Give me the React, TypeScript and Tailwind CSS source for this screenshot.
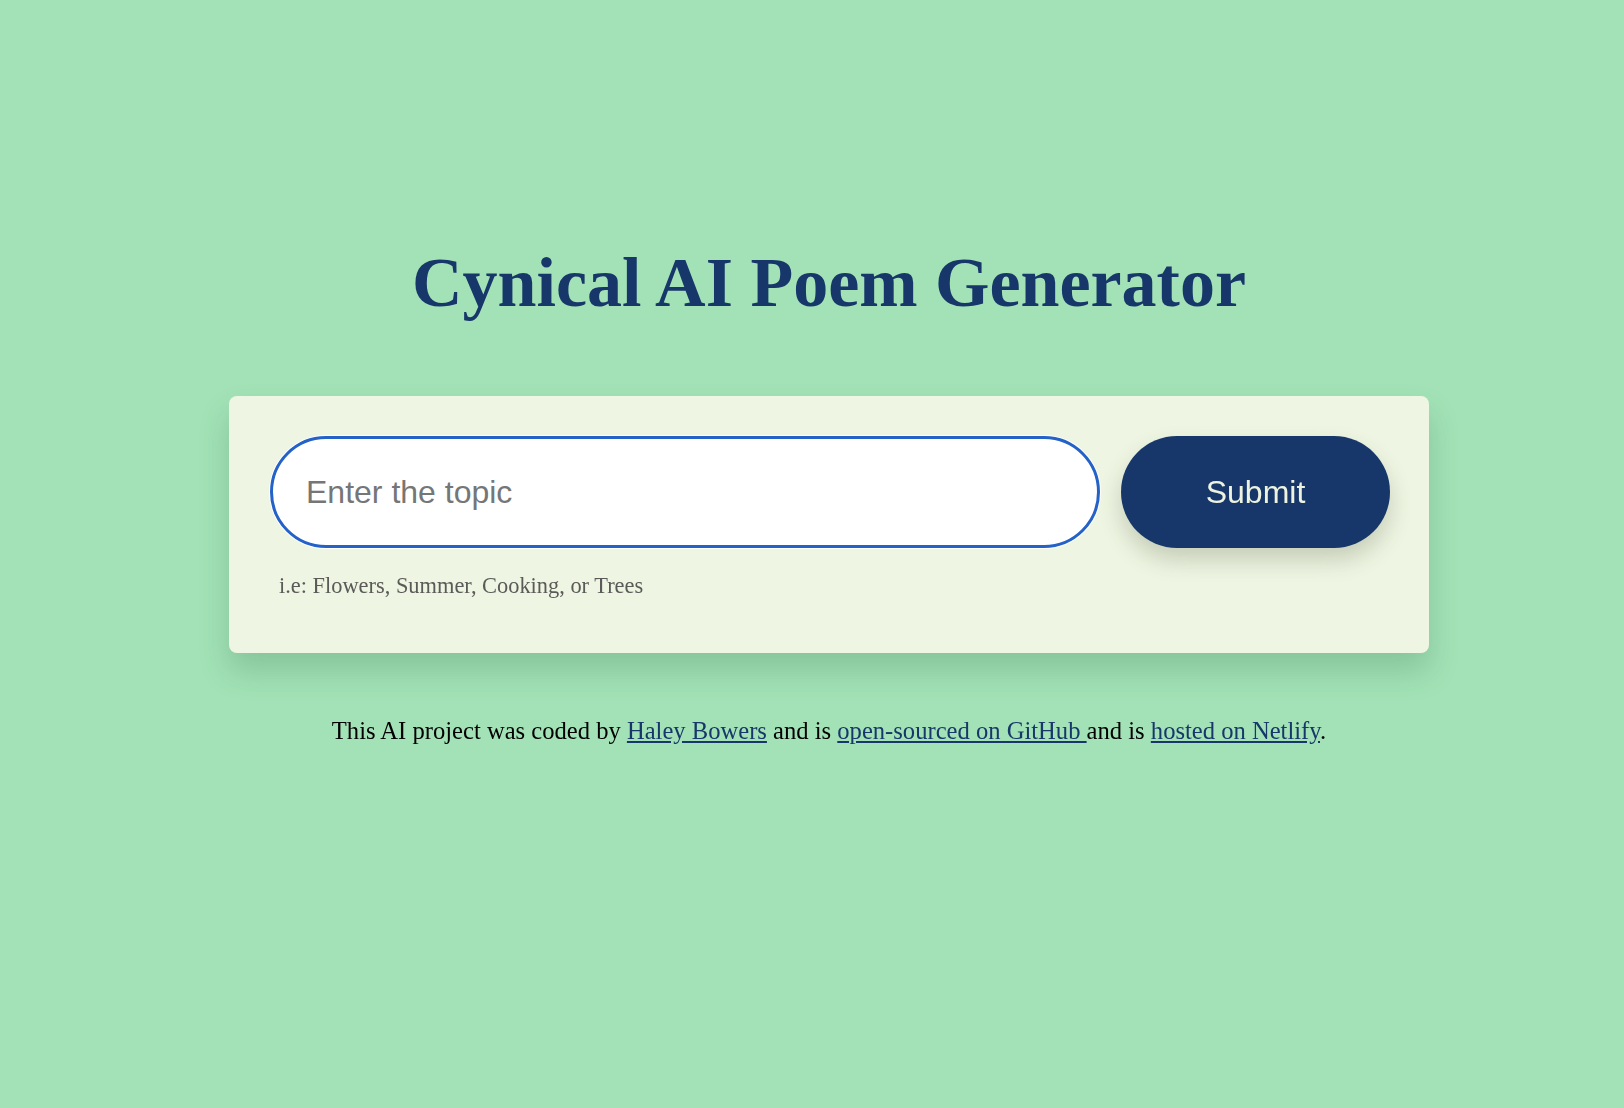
import { useState } from "react";

export default function App() {
  const [topic, setTopic] = useState("");

  return (
    <main className="min-h-screen w-full bg-[#a2e2b6] pl-[34px] pt-[248px] flex flex-col items-center font-['Liberation_Serif',serif]">
      {/* Title */}
      <h1 className="text-[70px] leading-none font-bold text-[#17376a]">Cynical AI Poem Generator</h1>

      {/* Form card */}
      <section className="mt-[78px] w-[1200px] rounded-lg bg-[#eef5e2] pt-[40px] pl-[41px] pr-[39px] pb-[53px] shadow-[0_18px_30px_rgba(40,90,60,0.22)]">
        <form className="flex items-center gap-[21px]" onSubmit={(e) => e.preventDefault()}>
          <input
            type="search"
            autoFocus
            value={topic}
            onChange={(e) => setTopic(e.target.value)}
            placeholder="Enter the topic"
            className="h-[112px] flex-1 rounded-full border-[3px] border-[#2462c8] bg-white pl-[33px] pr-6 text-[32px] text-gray-800 placeholder:text-[#767676] caret-black outline-none ring-1 ring-white font-['Liberation_Sans',Arial,sans-serif]"
          />
          <button
            type="submit"
            className="h-[112px] w-[269px] rounded-full bg-[#17376a] text-[32px] text-[#eef3e0] shadow-[0_12px_22px_rgba(60,70,40,0.22)] font-['Liberation_Sans',Arial,sans-serif]"
          >
            Submit
          </button>
        </form>
        <p className="mt-[24px] pl-[9px] text-[22.4px] leading-[28px] text-[#5a5a58]">i.e: Flowers, Summer, Cooking, or Trees</p>
      </section>

      {/* Footer */}
      <footer className="mt-[62px] text-[24.6px] leading-8 text-black">
        This AI project was coded by{" "}
        <a href="#" className="text-[#17376a] underline">Haley Bowers</a> and is{" "}
        <a href="#" className="text-[#17376a] underline">open-sourced on GitHub </a>and is{" "}
        <a href="#" className="text-[#17376a] underline">hosted on Netlify</a>.
      </footer>
    </main>
  );
}
